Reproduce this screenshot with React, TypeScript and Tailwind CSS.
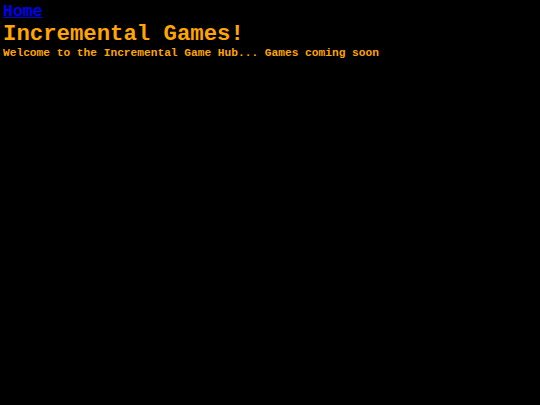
export default function App() {
  return (
    <div className="min-h-[405px] w-full bg-black px-[3px] font-['Liberation_Mono','DejaVu_Sans_Mono',monospace] font-bold">
      <nav className="pt-[3px] text-[16.5px] leading-[18px]">
        <a href="#" className="text-[#0000ee] underline">
          Home
        </a>
      </nav>
      <h1 className="text-[22.3px] leading-[26px] text-[#ffa500]">Incremental Games!</h1>
      <p className="text-[11.2px] leading-[13px] text-[#ffa500]">
        Welcome to the Incremental Game Hub... Games coming soon
      </p>
    </div>
  );
}
